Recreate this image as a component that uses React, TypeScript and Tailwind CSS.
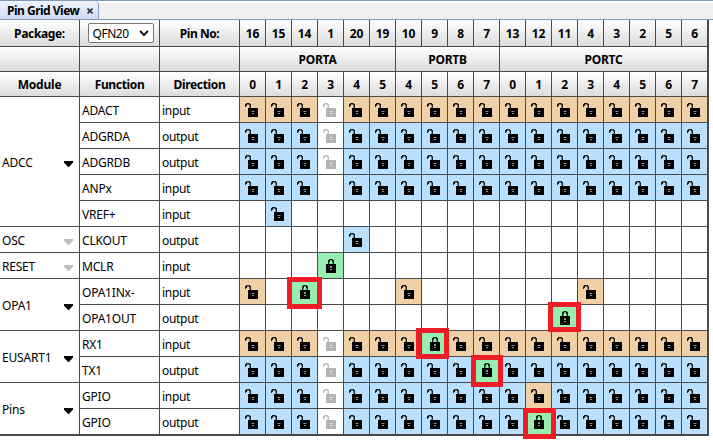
const PINS = [16, 15, 14, 1, 20, 19, 10, 9, 8, 7, 13, 12, 11, 4, 3, 2, 5, 6];
const BITS = [0, 1, 2, 3, 4, 5, 4, 5, 6, 7, 0, 1, 2, 3, 4, 5, 6, 7];

// One letter per pin: o = peach, b = blue, g = locked, x = unavailable, . = empty
type Row = { fn: string; dir: string; cells: string };
type Module = { name: string; enabled: boolean; rows: Row[] };

const MODULES: Module[] = [
  {
    name: 'ADCC',
    enabled: true,
    rows: [
      { fn: 'ADACT', dir: 'input', cells: 'oooxoooooooooooooo' },
      { fn: 'ADGRDA', dir: 'output', cells: 'bbbxbbbbbbbbbbbbbb' },
      { fn: 'ADGRDB', dir: 'output', cells: 'bbbxbbbbbbbbbbbbbb' },
      { fn: 'ANPx', dir: 'input', cells: 'bbb.bbbbbbbbbbbbbb' },
      { fn: 'VREF+', dir: 'input', cells: '.b................' },
    ],
  },
  { name: 'OSC', enabled: false, rows: [{ fn: 'CLKOUT', dir: 'output', cells: '....b.............' }] },
  { name: 'RESET', enabled: false, rows: [{ fn: 'MCLR', dir: 'input', cells: '...g..............' }] },
  {
    name: 'OPA1',
    enabled: true,
    rows: [
      { fn: 'OPA1INx-', dir: 'input', cells: 'o.g...o......o....' },
      { fn: 'OPA1OUT', dir: 'output', cells: '............g.....' },
    ],
  },
  {
    name: 'EUSART1',
    enabled: true,
    rows: [
      { fn: 'RX1', dir: 'input', cells: 'oooxooogoooooooooo' },
      { fn: 'TX1', dir: 'output', cells: 'bbbxbbbbbgbbbbbbbb' },
    ],
  },
  {
    name: 'Pins',
    enabled: true,
    rows: [
      { fn: 'GPIO', dir: 'input', cells: 'bbbxbbbbbbbobbbbbb' },
      { fn: 'GPIO', dir: 'output', cells: 'bbbxbbbbbbbgbbbbbb' },
    ],
  },
];

const FILL: Record<string, string> = {
  o: 'bg-[#efd0a7]',
  b: 'bg-[#b9e1ff]',
  g: 'bg-[#98edb0]',
  x: 'bg-white',
  '.': 'bg-white',
};

const HEAD =
  'flex items-center justify-center border-r border-b border-[#4a4a4a] bg-linear-to-b from-white to-[#dcdcdc] font-bold';

function Unlocked({ dim }: { dim: boolean }) {
  return (
    <svg width="13" height="14" viewBox="0 0 13 14" className={dim ? 'text-[#b4b4b4]' : 'text-black'} shapeRendering="crispEdges">
      <path d="M3 5h10v9H3z" fill="currentColor" />
      <path d="M1 0h4v1H1zM0 1h2v2H0zM4 1h2v1H4zM5 2h1v3H5zM0 3h1v1H0z" fill="currentColor" opacity="0.85" />
      <path d="M2 1h2v1H2zM4 2h1v3H4z" fill="currentColor" opacity="0.4" />
      <path d="M7 8h2v1H7zM7 10h2v1H7z" fill="#fff" opacity="0.55" />
      <path d="M6 8h1v1H6zM9 8h1v1H9z" fill="#fff" opacity="0.3" />
    </svg>
  );
}

function Locked() {
  return (
    <svg width="10" height="14" viewBox="0 0 10 14" shapeRendering="crispEdges">
      <path d="M0 5h10v9H0z" />
      <path d="M3 0h4v1H3zM2 1h2v2H2zM6 1h2v2H6zM2 3h1v2H2zM7 3h1v2H7z" opacity="0.85" />
      <path d="M4 1h2v1H4zM3 3h1v2H3zM6 3h1v2H6z" opacity="0.35" />
      <path d="M4 7h2v2H4zM4 10h2v1H4z" fill="#98edb0" opacity="0.7" />
    </svg>
  );
}

function PinCell({ kind, last }: { kind: string; last: boolean }) {
  return (
    <div className={`border-b border-[#4a4a4a] pt-1.5 ${last ? 'border-r-2' : 'border-r'} ${kind === 'g' ? 'pl-2' : 'pl-[5px]'} ${FILL[kind]}`}>
      {kind === 'g' && <Locked />}
      {(kind === 'o' || kind === 'b' || kind === 'x') && <Unlocked dim={kind === 'x'} />}
    </div>
  );
}

function ModuleRows({ mod }: { mod: Module }) {
  return (
    <div className="flex">
      <div className="flex w-20 shrink-0 items-center justify-between border-r border-b border-[#4a4a4a] pt-0.5 pr-1.5 pl-0.5">
        <span>{mod.name}</span>
        <svg width="9" height="6" viewBox="0 0 9 6" className={`mt-[3px] ${mod.enabled ? 'text-black' : 'text-[#bdbdbd]'}`}>
          <path d="M0 0h9v1.5L5 6H4L0 1.5z" fill="currentColor" />
        </svg>
      </div>
      <div>
        {mod.rows.map((row, r) => (
          <div key={r} className="grid h-[26px] grid-cols-[80px_80px_repeat(17,26px)_27px]">
            <div className="flex items-center border-r border-b border-[#4a4a4a] pt-0.5 pl-0.5">{row.fn}</div>
            <div className="flex items-center border-r border-b border-[#4a4a4a] pt-0.5 pl-0.5 tracking-[-0.3px]">{row.dir}</div>
            {row.cells.split('').map((kind, i) => (
              <PinCell key={i} kind={kind} last={i === 17} />
            ))}
          </div>
        ))}
      </div>
    </div>
  );
}

function HeaderNumbers({ values }: { values: number[] }) {
  return (
    <>
      {values.map((n, i) => (
        <div key={i} className={`${HEAD} pt-px ${i === 17 ? 'border-r-2' : ''}`}>
          {n}
        </div>
      ))}
    </>
  );
}

const COLS = 'grid grid-cols-[80px_80px_80px_repeat(17,26px)_27px]';
const RED = 'absolute border-5 border-[#ee1c24]';

export default function App() {
  return (
    <div className="relative h-[441px] w-[713px] overflow-hidden bg-white font-['Noto_Sans','Open_Sans',sans-serif] text-[12px] leading-4 tracking-[-0.2px] text-black">
      <div className="flex h-5 border-t border-b border-[#8099b5] bg-linear-to-b from-white from-10% to-[#f0f0f0] to-10%">
        <div className="flex w-[99px] items-center gap-2 rounded-tr-sm border-r border-[#8ba3c4] bg-linear-to-b from-[#eef4fd] to-[#cddcf3] pt-px pl-[7px] font-bold">
          <span className="whitespace-nowrap tracking-[-0.5px]">Pin Grid View</span>
          <svg width="6" height="6" viewBox="0 0 6 6" stroke="#333" strokeWidth="1.6">
            <path d="M.5.5l5 5M5.5.5l-5 5" />
          </svg>
        </div>
      </div>
      <div className="w-[709px] border-b border-[#4a4a4a]">
        <div className={`${COLS} h-[27px]`}>
          <div className={`${HEAD} pt-px tracking-[-0.35px]`}>Package:</div>
          <div className={`${HEAD} pl-0.5`}>
            <div className="flex h-5 w-[66px] items-center justify-between rounded-[2px] border border-[#767676] bg-white pt-px pr-1 pl-1 font-normal tracking-[-0.45px]">
              <span>QFN20</span>
              <svg width="10" height="7" viewBox="0 0 10 7" fill="none" stroke="#111" strokeWidth="2">
                <path d="M1 1l4 4 4-4" />
              </svg>
            </div>
          </div>
          <div className={`${HEAD} pt-px tracking-[-0.45px]`}>Pin No:</div>
          <HeaderNumbers values={PINS} />
        </div>
        <div className={`${COLS} h-[25px]`}>
          <div className={HEAD} />
          <div className={HEAD} />
          <div className={HEAD} />
          <div className={`${HEAD} col-span-6 pt-px`}>PORTA</div>
          <div className={`${HEAD} col-span-4 pt-px`}>PORTB</div>
          <div className={`${HEAD} col-span-8 border-r-2 pt-px`}>PORTC</div>
        </div>
        <div className={`${COLS} h-[25px]`}>
          <div className={`${HEAD} pt-px`}>Module</div>
          <div className={`${HEAD} pt-px tracking-[-0.35px]`}>Function</div>
          <div className={`${HEAD} pt-px tracking-[-0.35px]`}>Direction</div>
          <HeaderNumbers values={BITS} />
        </div>
        {MODULES.map((m) => (
          <ModuleRows key={m.name} mod={m} />
        ))}
      </div>
      <div className={`${RED} top-[277px] left-[287px] h-8 w-[35px]`} />
      <div className={`${RED} top-[302px] left-[548px] h-[30px] w-[33px]`} />
      <div className={`${RED} top-[328px] left-[416px] h-[31px] w-[33px]`} />
      <div className={`${RED} top-[355px] left-[471px] h-8 w-8`} />
      <div className={`${RED} top-[408px] left-[523px] h-[31px] w-[33px]`} />
    </div>
  );
}
